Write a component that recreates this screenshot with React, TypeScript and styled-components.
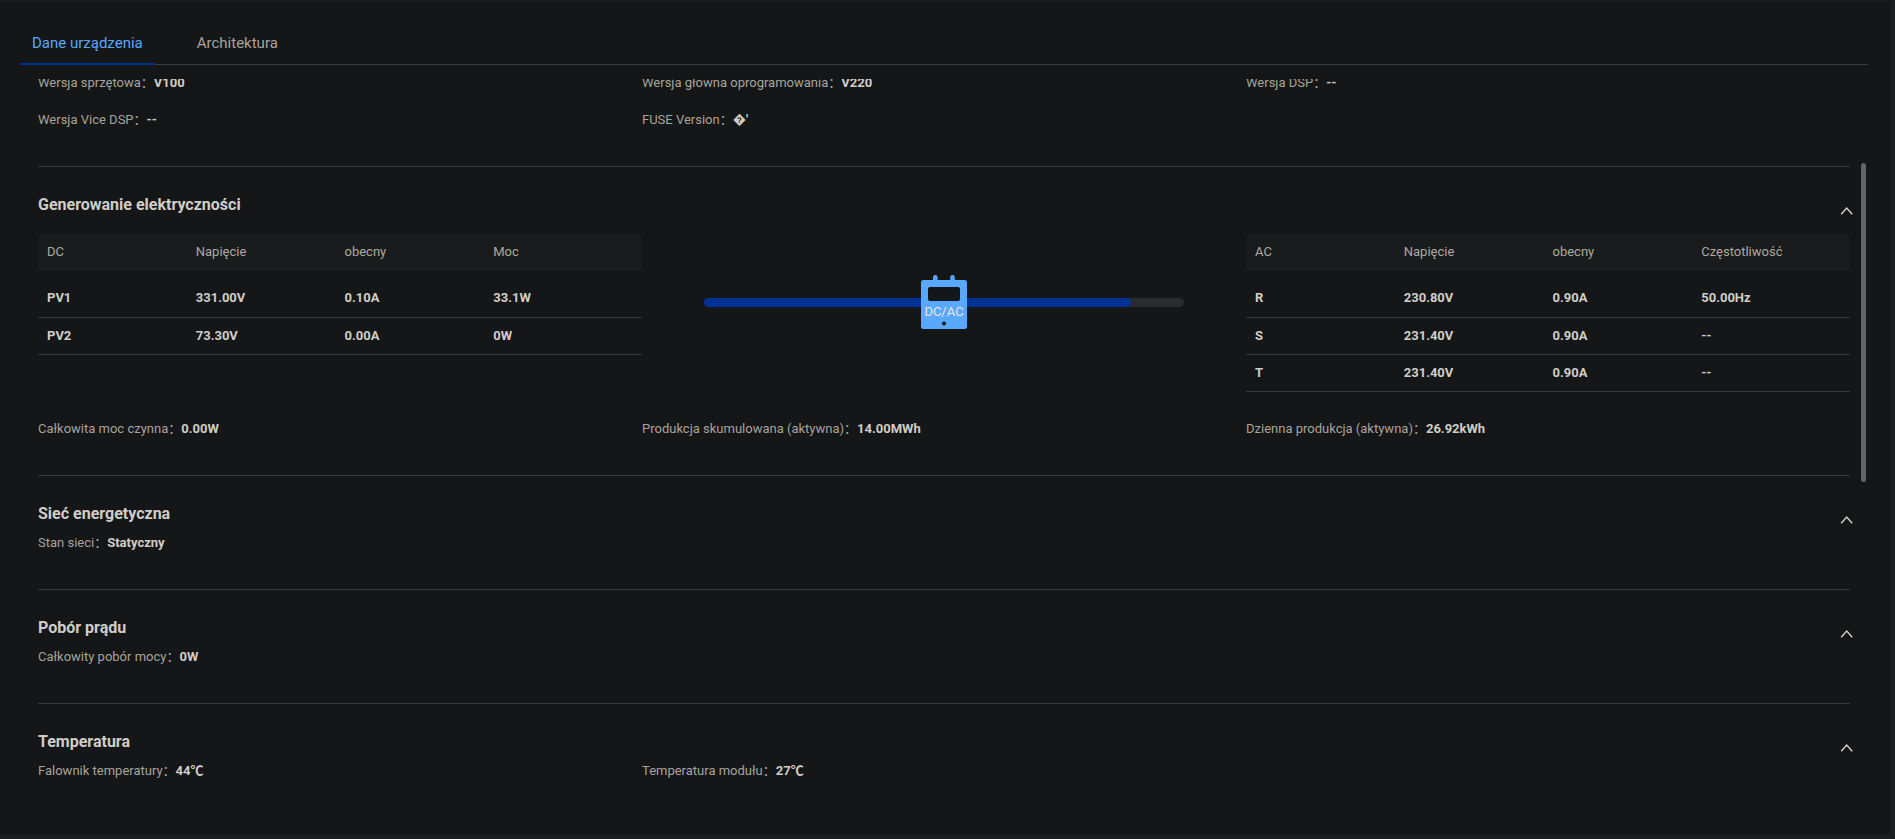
import React, { useState } from 'react';
import styled, { createGlobalStyle } from 'styled-components';

const GlobalStyle = createGlobalStyle`
  * { box-sizing: border-box; }
  body {
    margin: 0;
    background: #1b1e1f;
    color: #d1cdc7;
    font: 13px/20px Roboto, "Noto Sans CJK SC", sans-serif;
  }
`;

const Panel = styled.main`
  display: flex;
  flex-direction: column;
  margin: 1px 5px 0 0;
  min-height: calc(100vh - 6px);
  padding-top: 20px;
  background: #141617;
  border-radius: 0 0 4px 0;
`;

const TabBar = styled.nav`
  display: flex;
  gap: 30px;
  margin: 0 22px 0 20px;
  border-bottom: 1px solid #3a3d3e;
`;

const Tab = styled.button<{ $active: boolean }>`
  height: 44px;
  margin-bottom: -1px;
  padding: 2px 12px 0;
  border: 0;
  border-bottom: 2px solid ${(p) => (p.$active ? '#003296' : 'transparent')};
  background: none;
  color: ${(p) => (p.$active ? '#58a8fd' : '#a8a49c')};
  font: 15px/20px Roboto, sans-serif;
  cursor: pointer;
`;

const Viewport = styled.div`
  position: relative;
  flex: 1;
  margin-top: 14px;
  padding: 0 40px 0 38px;
  overflow: hidden;
`;

const ScrollThumb = styled.div`
  position: absolute;
  top: 84px;
  right: 24px;
  width: 5px;
  height: 319px;
  border-radius: 3px;
  background: #5f6669;
`;

const Section = styled.section<{ $scrolled?: boolean }>`
  margin-top: ${(p) => (p.$scrolled ? '-15px' : '0')};
  padding: ${(p) => (p.$scrolled ? '0' : '28px')} 0 28px;
  border-bottom: 1px solid #363a3c;

  &:last-of-type { border-bottom: 0; }
`;

const SectionHead = styled.header`
  display: flex;
  justify-content: space-between;
  align-items: flex-start;
  height: 20px;
`;

const Title = styled.h2`
  margin: 0;
  font-size: 16px;
  line-height: 20px;
  font-weight: 700;
`;

const Toggle = styled.button`
  display: flex;
  align-items: center;
  justify-content: center;
  width: 20px;
  height: 32px;
  margin-right: -7px;
  padding: 0;
  border: 0;
  background: none;
  color: #d6d1c9;
  cursor: pointer;
`;

const Columns = styled.dl`
  display: grid;
  grid-template-columns: repeat(3, 1fr);
  margin: 0;
`;

const Item = styled.div`
  display: flex;
  align-items: center;
  height: 37px;
`;

const Label = styled.dt`
  color: #a8a49c;
`;

const Value = styled.dd`
  margin: 0;
  font-weight: 700;
`;

const Generation = styled.div`
  display: grid;
  grid-template-columns: repeat(3, 1fr);
  align-items: start;
  padding: 19px 0 18px;
`;

const Table = styled.table`
  display: block;
  text-align: left;

  thead, tbody { display: block; }
  tbody { padding-top: 9px; }
  th, td { padding: 0; }
`;

const Row = styled.tr`
  display: grid;
  grid-template-columns: repeat(4, 1fr);
  padding: 8px 0 8px 9px;
  border-bottom: 1px solid #363a3c;
  font-weight: 700;

  &:first-child { padding-bottom: 9px; }
`;

const HeadRow = styled(Row)`
  border-bottom: 0;
  border-radius: 4px;
  background: #191b1c;
  color: #b0a99c;

  th { font-weight: 400; }
`;

const Flow = styled.div`
  display: grid;
  align-items: center;
  justify-items: center;
  padding: 41px 62px 0;

  > * { grid-area: 1 / 1; }
`;

const Track = styled.div`
  width: 100%;
  height: 9px;
  border-radius: 5px;
  background: #292c2e;
`;

const Fill = styled.div`
  height: 100%;
  border-radius: 5px;
  background: #003296;
`;

const Device = styled.svg`
  display: block;
  z-index: 1;

  text {
    fill: #e8e6e3;
    font: 13px Roboto, sans-serif;
    text-anchor: middle;
  }
`;

type Info = [label: string, value: string];

function InfoList({ items }: { items: Info[] }) {
  return (
    <Columns>
      {items.map(([label, value]) => (
        <Item key={label}>
          <Label>{label}：</Label>
          <Value>{value}</Value>
        </Item>
      ))}
    </Columns>
  );
}

function DataTable({ head, rows }: { head: string[]; rows: string[][] }) {
  return (
    <Table>
      <thead>
        <HeadRow>
          {head.map((h) => (
            <th key={h} scope="col">{h}</th>
          ))}
        </HeadRow>
      </thead>
      <tbody>
        {rows.map((r) => (
          <Row key={r[0]}>
            {r.map((c, i) => (
              <td key={i}>{c}</td>
            ))}
          </Row>
        ))}
      </tbody>
    </Table>
  );
}

function Inverter({ load }: { load: number }) {
  return (
    <Flow>
      <Track>
        <Fill style={{ width: `${load}%` }} />
      </Track>
      <Device width="46" height="54" viewBox="0 0 46 54" role="img" aria-label="DC/AC">
        <path
          fill="#58a8fd"
          d="M12 7V2.3a2.3 2.3 0 0 1 4.6 0V7zM29.2 7V2.3a2.3 2.3 0 0 1 4.6 0V7z"
        />
        <rect y="5" width="46" height="49" rx="2.5" fill="#58a8fd" />
        <rect x="7" y="12" width="32" height="14" rx="2" fill="#141617" />
        <text x="23" y="41">DC/AC</text>
        <circle cx="23" cy="48.5" r="2" fill="#141617" />
      </Device>
    </Flow>
  );
}

function Group({ title, children }: { title: string; children: React.ReactNode }) {
  const [open, setOpen] = useState(true);
  return (
    <Section>
      <SectionHead>
        <Title>{title}</Title>
        <Toggle type="button" aria-label={title} aria-expanded={open} onClick={() => setOpen(!open)}>
          <svg width="14" height="10" viewBox="0 0 14 10" fill="none" stroke="currentColor" strokeWidth="1.4">
            <path d={open ? 'M1.2 8.3 6.7 2l5.5 6.3' : 'M1.2 2 6.7 8.3 12.2 2'} />
          </svg>
        </Toggle>
      </SectionHead>
      {open && children}
    </Section>
  );
}

const tabs = ['Dane urządzenia', 'Architektura'];

export default function App() {
  const [tab, setTab] = useState(tabs[0]);
  return (
    <>
      <GlobalStyle />
      <Panel>
        <TabBar>
          {tabs.map((t) => (
            <Tab key={t} type="button" $active={t === tab} onClick={() => setTab(t)}>
              {t}
            </Tab>
          ))}
        </TabBar>
        <Viewport>
          <Section $scrolled>
            <InfoList
              items={[
                ['Wersja sprzętowa', 'V100'],
                ['Wersja głowna oprogramowania', 'V220'],
                ['Wersja DSP', '--'],
                ['Wersja Vice DSP', '--'],
                ['FUSE Version', "\uFFFD'"],
              ]}
            />
          </Section>
          <Group title="Generowanie elektryczności">
            <Generation>
              <DataTable
                head={['DC', 'Napięcie', 'obecny', 'Moc']}
                rows={[
                  ['PV1', '331.00V', '0.10A', '33.1W'],
                  ['PV2', '73.30V', '0.00A', '0W'],
                ]}
              />
              <Inverter load={89} />
              <DataTable
                head={['AC', 'Napięcie', 'obecny', 'Częstotliwość']}
                rows={[
                  ['R', '230.80V', '0.90A', '50.00Hz'],
                  ['S', '231.40V', '0.90A', '--'],
                  ['T', '231.40V', '0.90A', '--'],
                ]}
              />
            </Generation>
            <InfoList
              items={[
                ['Całkowita moc czynna', '0.00W'],
                ['Produkcja skumulowana (aktywna)', '14.00MWh'],
                ['Dzienna produkcja (aktywna)', '26.92kWh'],
              ]}
            />
          </Group>
          <Group title="Sieć energetyczna">
            <InfoList items={[['Stan sieci', 'Statyczny']]} />
          </Group>
          <Group title="Pobór prądu">
            <InfoList items={[['Całkowity pobór mocy', '0W']]} />
          </Group>
          <Group title="Temperatura">
            <InfoList
              items={[
                ['Falownik temperatury', '44℃'],
                ['Temperatura modułu', '27℃'],
              ]}
            />
          </Group>
          <ScrollThumb />
        </Viewport>
      </Panel>
    </>
  );
}
